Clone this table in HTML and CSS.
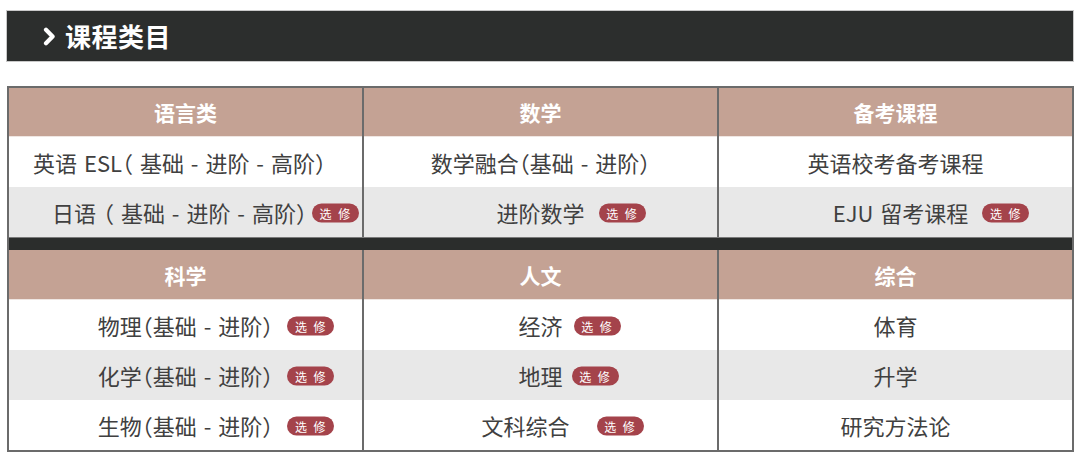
FILE: index.html
```html
<!DOCTYPE html>
<html lang="zh-CN">
<head>
<meta charset="utf-8">
<title>课程类目</title>
<link rel="stylesheet" href="styles.css">
</head>
<body>
<div class="page">
  <div class="titlebar">
    <svg class="chev" width="13" height="19" viewBox="0 0 13 19" aria-hidden="true">
      <path d="M3 2.8 L9.6 9.5 L3 16.2" fill="none" stroke="#fff" stroke-width="4.2" stroke-linecap="round" stroke-linejoin="round"/>
    </svg>
    <span class="title">课程类目</span>
  </div>

  <div class="table">
    <div class="section first">
      <div class="head">语言类</div>
      <div class="head">数学</div>
      <div class="head">备考课程</div>

      <div class="cell"><span class="item back">英语 ESL（ 基础 - 进阶 - 高阶）</span></div>
      <div class="cell"><span class="item">数学融合（基础 - 进阶）</span></div>
      <div class="cell"><span class="item">英语校考备考课程</span></div>

      <div class="cell alt"><span class="item back">日语 （ 基础 - 进阶 - 高阶）<span class="badge near">选 修</span></span></div>
      <div class="cell alt"><span class="item">进阶数学<span class="badge">选 修</span></span></div>
      <div class="cell alt"><span class="item shift">EJU 留考课程<span class="badge">选 修</span></span></div>
    </div>

    <div class="band"></div>

    <div class="section">
      <div class="head">科学</div>
      <div class="head">人文</div>
      <div class="head">综合</div>

      <div class="cell"><span class="item">物理（基础 - 进阶）<span class="badge">选 修</span></span></div>
      <div class="cell"><span class="item">经济<span class="badge mid">选 修</span></span></div>
      <div class="cell"><span class="item">体育</span></div>

      <div class="cell alt"><span class="item">化学（基础 - 进阶）<span class="badge">选 修</span></span></div>
      <div class="cell alt"><span class="item">地理<span class="badge close">选 修</span></span></div>
      <div class="cell alt"><span class="item">升学</span></div>

      <div class="cell"><span class="item">生物（基础 - 进阶）<span class="badge">选 修</span></span></div>
      <div class="cell"><span class="item left">文科综合<span class="badge far">选 修</span></span></div>
      <div class="cell"><span class="item">研究方法论</span></div>
    </div>
  </div>
</div>
</body>
</html>
```

FILE: styles.css
```css
* { box-sizing: border-box; }

html, body {
  margin: 0;
  padding: 0;
  background: #ffffff;
}

body {
  font-family: "Noto Sans CJK SC", "Noto Sans", sans-serif;
  color: #404040;
}

.page {
  width: 1068px;
  margin: 10px 0 0 6px;
}

.titlebar {
  height: 52px;
  background: #2c2e2d;
  border: 1px solid #c9c9c9;
  display: flex;
  align-items: center;
  padding-left: 36px;
  gap: 9px;
}

.chev {
  display: block;
  margin-top: 1px;
}

.title {
  color: #ffffff;
  font-size: 26px;
  font-weight: 700;
  letter-spacing: 0.5px;
  line-height: 1;
}

.table {
  margin: 24px 0 0 1px;
  width: 1067px;
  border: 2px solid #6b6b6b;
  background: #6b6b6b;
}

.section {
  display: grid;
  grid-template-columns: 353px 353px 353px;
  grid-template-rows: 50px 50px 50px 50px;
  column-gap: 2px;
}

.section.first {
  grid-template-rows: 49px 50px 50px;
}

.head {
  background: #c4a294;
  color: #ffffff;
  font-size: 21px;
  font-weight: 700;
  display: flex;
  align-items: center;
  justify-content: center;
  border-bottom: 1px solid #efe6e2;
}

.cell {
  background: #ffffff;
  font-size: 22px;
  word-spacing: 2px;
  font-feature-settings: "halt" 1;
  display: flex;
  align-items: center;
  justify-content: center;
  white-space: nowrap;
}

.cell.alt {
  background: #e8e8e8;
}

.item {
  position: relative;
  line-height: 1;
}

.item.back { left: -6px; }
.item.shift { left: 5px; }
.item.left { left: -15px; }

.band {
  height: 13px;
  background: #2b2d2c;
  border-top: 1px solid #7a7a7a;
}

.badge {
  position: absolute;
  left: calc(100% + 14px);
  top: 50%;
  transform: translateY(calc(-50% + 1px));
  width: 47px;
  height: 19px;
  border-radius: 10px;
  background: #a4434b;
  color: #ffffff;
  font-size: 12px;
  font-feature-settings: normal;
  word-spacing: 2px;
  line-height: 19px;
  text-align: center;
  letter-spacing: 1px;
}

.badge.near { left: calc(100% + 5px); }
.badge.mid { left: calc(100% + 11px); }
.badge.close { left: calc(100% + 9px); }
.badge.far { left: calc(100% + 27px); }
```
